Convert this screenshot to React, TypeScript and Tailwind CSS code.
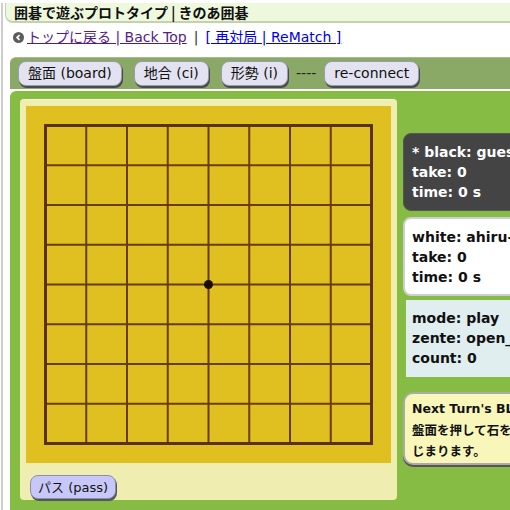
import React from 'react'

const FONT = { fontFamily: '"DejaVu Sans", "Noto Sans CJK JP", sans-serif' }
const JP = { fontFamily: '"Noto Sans CJK JP", sans-serif' }

function ToolButton({ children }: { children: React.ReactNode }) {
  return (
    <button className="h-[25px] px-[9px] rounded-lg bg-[#e2e2f0] border border-[#9a9ab0] shadow-[1px_2px_0_#4a4a4a] text-[14px] text-[#111] leading-none whitespace-nowrap">
      {children}
    </button>
  )
}

function GoBoard() {
  const left = 19.5
  const top = 19.5
  const dx = 40.75
  const dy = 39.75
  const lines = []
  for (let i = 1; i < 8; i++) {
    lines.push(<line key={'v' + i} x1={left + i * dx} y1={top} x2={left + i * dx} y2={top + 8 * dy} stroke="#6a3c05" strokeWidth={2} />)
    lines.push(<line key={'h' + i} x1={left} y1={top + i * dy} x2={left + 8 * dx} y2={top + i * dy} stroke="#6a3c05" strokeWidth={2} />)
  }
  return (
    <svg width={365} height={357} className="block">
      <rect x={0} y={0} width={365} height={357} fill="#dfc020" />
      {lines}
      <rect x={left} y={top} width={8 * dx} height={8 * dy} fill="none" stroke="#5e3200" strokeWidth={3} />
      <circle cx={left + 4 * dx} cy={top + 4 * dy} r={4.5} fill="#1a0d00" />
    </svg>
  )
}

export default function App() {
  return (
    <div className="w-[510px] h-[510px] overflow-hidden bg-white" style={FONT}>
      <div className="ml-px border-l-2 border-[#cdcdcd] pl-[2px] h-full w-[900px]">
        {/* title */}
        <div className="mt-[3px] h-[20px] bg-[#eef8dc] border-b-2 border-l border-[#c2d2ac] rounded-bl-lg pl-[8px] flex items-center">
          <span className="text-[14px] font-bold text-[#111] leading-none" style={JP}>
            囲碁で遊ぶプロトタイプ | きのあ囲碁
          </span>
        </div>

        {/* links */}
        <div className="h-[28px] flex items-center pl-[8px] text-[14px] leading-none">
          <span className="w-[11px] h-[11px] rounded-full bg-[#5c5c5c] flex items-center justify-center mr-[3px]">
            <svg width="7" height="7" viewBox="0 0 6 6">
              <path d="M3.9 0.9 L1.8 3 L3.9 5.1" stroke="#fff" strokeWidth="1.5" fill="none" />
            </svg>
          </span>
          <a href="#" className="text-[#551a8b] underline">トップに戻る | Back Top</a>
          <span className="mx-[7px] text-[#333]">|</span>
          <a href="#" className="text-[#0000ee] underline">[ 再対局 | ReMatch ]</a>
        </div>

        {/* toolbar */}
        <div className="ml-[5px] mt-[6px] h-[32px] bg-[#8aa866] border-t border-[#a6bf88] rounded-tl-md flex items-center gap-[12px] pl-[8px] pb-px">
          <ToolButton>盤面 (board)</ToolButton>
          <ToolButton>地合 (ci)</ToolButton>
          <ToolButton>形勢 (i)</ToolButton>
          <span className="text-[14px] text-[#222] -mx-[4px]">----</span>
          <ToolButton>re-connect</ToolButton>
        </div>

        {/* main */}
        <div className="ml-[5px] mt-[2px] h-[420px] bg-[#86bb44] rounded-tl-md flex items-start gap-[6px] pl-[10px] pt-[8px]">
          <div className="w-[377px] bg-[#efedb0] border-t border-[#f6f5d4] rounded p-[6px] pb-px">
            <GoBoard />
            <button className="mt-[12px] ml-[4px] h-[24px] px-[7px] rounded-lg bg-[#c8c8f8] border border-[#8c8cb8] shadow-[1px_2px_0_#555] text-[13px] text-[#111] leading-none">
              パス (pass)
            </button>
          </div>

          <div className="mt-[34px] w-[220px] flex flex-col text-[14px] font-bold leading-[20px]">
            <div className="bg-[#444] border border-[#555] rounded-lg px-[8px] py-[8px] text-white">
              <div>* black: guest</div>
              <div>take: 0</div>
              <div>time: 0 s</div>
            </div>
            <div className="mt-[6px] bg-white border-2 border-[#cfcfcf] rounded-lg px-[7px] pt-[8px] pb-[7px] text-[#111]">
              <div>white: ahiru-bot</div>
              <div>take: 0</div>
              <div>time: 0 s</div>
            </div>
            <div className="mt-[4px] ml-[3px] bg-[#e0eeef] px-[6px] pt-[8px] pb-[9px] text-[#111]">
              <div>mode: play</div>
              <div>zente: open_game</div>
              <div>count: 0</div>
            </div>
            <div className="mt-[15px] bg-[#f8f6b8] border-2 border-[#aaa] rounded-[10px] shadow-[0_2px_0_#555] px-[7px] pt-[4px] pb-[2px] text-[12.5px] leading-[21px] text-[#111]">
              <div>Next Turn's BLACK</div>
              <div style={JP}>盤面を押して石を置くと対局がは</div>
              <div style={JP}>じまります。</div>
            </div>
          </div>
        </div>
      </div>
    </div>
  )
}
